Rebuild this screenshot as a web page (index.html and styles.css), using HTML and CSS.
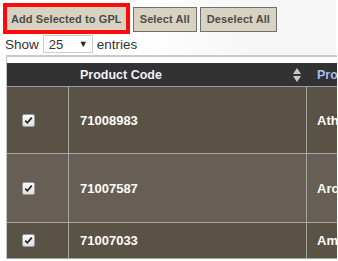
FILE: index.html
```html
<!DOCTYPE html>
<html lang="en">
<head>
  <meta charset="UTF-8">
  <title>GPL Products</title>
  <link rel="stylesheet" href="styles.css">
</head>
<body>
  <div class="panel">
    <div class="toolbar">
      <button class="btn btn_gpl">Add Selected to GPL</button>
      <button class="btn">Select All</button>
      <button class="btn">Deselect All</button>
    </div>
    <div class="length">
      <span>Show</span>
      <span class="select"><span>25</span><span class="arrow">▼</span></span>
      <span>entries</span>
    </div>
  </div>
  <div class="table_wrap">
    <table class="grid">
      <thead>
        <tr>
          <th class="col_check"></th>
          <th class="col_code">
            <div class="th_inner">
              <span>Product Code</span>
              <svg class="sort" width="8" height="14" viewBox="0 0 8 14">
                <polygon points="4,0 8,6 0,6" />
                <polygon points="0,8 8,8 4,14" />
              </svg>
            </div>
          </th>
          <th class="col_name">Product Name</th>
        </tr>
      </thead>
      <tbody>
        <tr class="row_dark tall">
          <td class="col_check"><span class="check"><svg width="11" height="11" viewBox="0 0 11 11"><path d="M2.2 5.6 L4.4 7.8 L8.8 2.6" /></svg></span></td>
          <td>71008983</td>
          <td>Athena</td>
        </tr>
        <tr class="row_light taller">
          <td class="col_check"><span class="check"><svg width="11" height="11" viewBox="0 0 11 11"><path d="M2.2 5.6 L4.4 7.8 L8.8 2.6" /></svg></span></td>
          <td>71007587</td>
          <td>Arcadia</td>
        </tr>
        <tr class="row_dark">
          <td class="col_check"><span class="check"><svg width="11" height="11" viewBox="0 0 11 11"><path d="M2.2 5.6 L4.4 7.8 L8.8 2.6" /></svg></span></td>
          <td>71007033</td>
          <td>Amber</td>
        </tr>
      </tbody>
    </table>
  </div>
</body>
</html>
```

FILE: styles.css
```css
body {
  margin: 0;
  background-color: #fff;
  font-family: 'Liberation Sans', Arial, sans-serif;
  color: #333;
}
.panel {
  padding-top: 3px;
  background: linear-gradient(to right, #fff 40%, #f6f6f6 75%);
  border-top-right-radius: 4px;
  margin-right: 2px;
}
.toolbar {
  display: flex;
  align-items: center;
  gap: 3px;
  padding-left: 3px;
}
.btn {
  height: 25px;
  margin-top: 1px;
  padding: 0 6px;
  border: 1px solid #6f6f6f;
  background-color: #d8d2c1;
  color: #4b4b4b;
  font-family: 'Liberation Sans', Arial, sans-serif;
  font-size: 11px;
  font-weight: bold;
  letter-spacing: 0.1px;
}
.btn_gpl {
  height: 31px;
  margin-top: 0;
  padding: 0 4px;
  border: 4px solid #ff0a0a;
}
.length {
  display: flex;
  align-items: center;
  gap: 4px;
  height: 18px;
  margin-top: 1px;
  padding-bottom: 2px;
  padding-left: 5px;
  font-size: 13.5px;
  color: #333;
}
.select {
  display: flex;
  align-items: center;
  justify-content: space-between;
  box-sizing: border-box;
  width: 50px;
  height: 18px;
  padding: 0 4px 0 5px;
  border: 1px solid #ccc;
  background-color: #fff;
  font-size: 13px;
}
.arrow {
  font-size: 9px;
  color: #222;
}
.table_wrap {
  margin-left: 6px;
  width: 330px;
  overflow: hidden;
  border-top: 2px solid #c9c9c9;
  border-left: 1px solid #c4c4c4;
  padding-top: 6px;
  background-color: #fff;
}
.grid {
  border-collapse: separate;
  border-spacing: 0;
  table-layout: fixed;
  width: 540px;
}
.grid th,
.grid td {
  box-sizing: border-box;
  padding: 0 0 0 11px;
  text-align: left;
  white-space: nowrap;
}
.grid th {
  height: 24px;
  background-color: #323232;
  border-bottom: 1px solid #9d9d9d;
  color: #eef1fb;
  font-size: 12.5px;
  font-weight: bold;
}
.grid th.col_check,
.grid td.col_check {
  width: 62px;
  padding-left: 15px;
}
.grid th.col_code {
  width: 238px;
  padding-right: 6px;
}
.grid th.col_name {
  width: 240px;
  padding-left: 10px;
  color: #a9bdf0;
}
.th_inner {
  display: flex;
  align-items: center;
  justify-content: space-between;
}
.sort {
  display: block;
  fill: #c9c9c9;
}
.grid td {
  height: 36px;
  border-right: 1px solid #a8a6a2;
  border-bottom: 1px solid #a8a6a2;
  color: #fbfbfb;
  font-size: 13px;
  font-weight: bold;
}
.grid td:last-child {
  padding-left: 10px;
}
.tall td {
  height: 67px;
}
.taller td {
  height: 69px;
}
.row_dark td {
  background-color: #5b5246;
}
.row_light td {
  background-color: #675f55;
}
.check {
  display: flex;
  align-items: center;
  justify-content: center;
  box-sizing: border-box;
  width: 13px;
  height: 13px;
  border: 1px solid #9a9a9a;
  border-radius: 2px;
  background: linear-gradient(#fafafa, #e0e0e0);
}
.check path {
  fill: none;
  stroke: #262626;
  stroke-width: 1.7;
}
```
